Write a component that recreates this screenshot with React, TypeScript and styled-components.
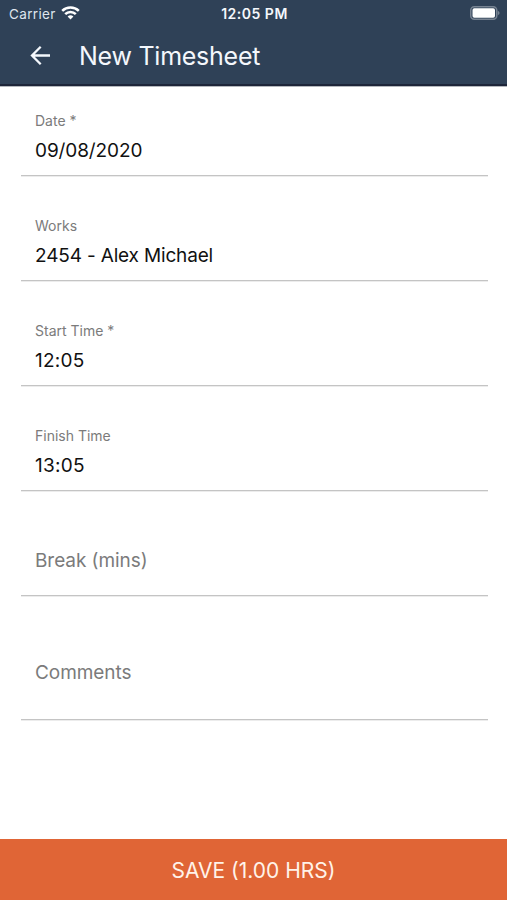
import React from "react";
import styled, { createGlobalStyle } from "styled-components";

const GlobalStyle = createGlobalStyle`
  * { box-sizing: border-box; }
  body { margin: 0; background: #fff; font-family: Inter, "Liberation Sans", sans-serif; }
`;

const Screen = styled.div`
  width: 100%;
  height: 900px;
  display: flex;
  flex-direction: column;
  overflow: hidden;
  background: #fff;
`;

const Header = styled.header`
  height: 86px;
  flex: none;
  background: #2f4157;
  border-bottom: 2px solid #1d2539;
  box-shadow: 0 1px 0 #b5b8bd;
  color: #f4f7fc;
`;

const StatusBar = styled.div`
  height: 27px;
  padding: 0 7px 0 9px;
  display: grid;
  grid-template-columns: 1fr auto 1fr;
  align-items: center;
  font-size: 13.5px;
`;

const Carrier = styled.div`
  display: flex;
  align-items: center;
  gap: 5px;
  color: #dfe5ed;
  letter-spacing: 0.35px;
`;

const WifiIcon = styled.svg`
  margin-bottom: 2px;
`;

const Clock = styled.div`
  font-weight: 600;
  font-size: 14px;
  letter-spacing: 0.5px;
`;

const Battery = styled.svg`
  justify-self: end;
  margin-bottom: 1px;
`;

const TitleBar = styled.div`
  height: 57px;
  padding-left: 29px;
  display: flex;
  align-items: center;
  gap: 28px;
`;

const Title = styled.h1`
  margin: 0;
  font-weight: 400;
  font-size: 25px;
  letter-spacing: -0.25px;
`;

const Form = styled.main`
  flex: 1;
  padding: 0 19px 0 21px;
`;

const Field = styled.div<{ $height: number; $bottom?: number }>`
  height: ${(p) => p.$height}px;
  padding: 0 14px ${(p) => p.$bottom ?? 12}px;
  display: flex;
  flex-direction: column;
  justify-content: flex-end;
  border-bottom: 1px solid #c4c4c4;
  box-shadow: 0 1px 0 #ececec;
`;

const Label = styled.span`
  font-size: 14px;
  line-height: 18px;
  color: #7b7b7b;
`;

const Value = styled.span<{ $tracking?: number }>`
  margin-top: 9px;
  font-size: 19px;
  line-height: 24px;
  letter-spacing: ${(p) => p.$tracking ?? 0}px;
  color: #111;
`;

const Placeholder = styled.span`
  font-size: 19px;
  line-height: 24px;
  letter-spacing: -0.07px;
  color: #7b7b7b;
`;

const SaveButton = styled.button`
  height: 61px;
  flex: none;
  border: 0;
  padding: 1px 0 0;
  background: #e06536;
  color: #fff3e9;
  font: 400 21px Inter, sans-serif;
`;

export default function App() {
  return (
    <Screen>
      <GlobalStyle />
      <Header>
        <StatusBar>
          <Carrier>
            <span>Carrier</span>
            <WifiIcon width="19" height="14" viewBox="0 0 19 14" fill="none" stroke="#fff" strokeWidth="2.5">
              <path d="M1.2 4.9a11.8 11.8 0 0 1 16.6 0M4.2 8.2a7.4 7.4 0 0 1 10.6 0" />
              <path d="M9.5 13.6l-2.9-3a4.1 4.1 0 0 1 5.8 0z" fill="#fff" stroke="none" />
            </WifiIcon>
          </Carrier>
          <Clock>12:05 PM</Clock>
          <Battery width="30" height="14" viewBox="0 0 30 14">
            <rect x="0.75" y="0.75" width="26" height="12.5" rx="3.5" fill="none" stroke="#778392" strokeWidth="1.5" />
            <rect x="2.5" y="2.3" width="22.5" height="9.4" rx="1.8" fill="#fff" />
            <path d="M27.8 4.8v4.4q1.8-.7 1.8-2.2t-1.8-2.2z" fill="#778392" />
          </Battery>
        </StatusBar>
        <TitleBar>
          <svg width="22" height="22" viewBox="0 0 22 22" fill="none" stroke="#f4f7fc" strokeWidth="2.3">
            <path d="M21 10.5H3.5M11.7 1.8l-8.7 8.7 8.7 8.7" />
          </svg>
          <Title>New Timesheet</Title>
        </TitleBar>
      </Header>
      <Form>
        <Field $height={90}><Label>Date *</Label><Value $tracking={-0.1}>09/08/2020</Value></Field>
        <Field $height={105}><Label>Works</Label><Value $tracking={-0.16}>2454 - Alex Michael</Value></Field>
        <Field $height={105}><Label>Start Time *</Label><Value $tracking={0.25}>12:05</Value></Field>
        <Field $height={105}><Label>Finish Time</Label><Value $tracking={0.25}>13:05</Value></Field>
        <Field $height={105} $bottom={22}><Placeholder>Break (mins)</Placeholder></Field>
        <Field $height={124} $bottom={34}><Placeholder>Comments</Placeholder></Field>
      </Form>
      <SaveButton>SAVE (1.00 HRS)</SaveButton>
    </Screen>
  );
}
